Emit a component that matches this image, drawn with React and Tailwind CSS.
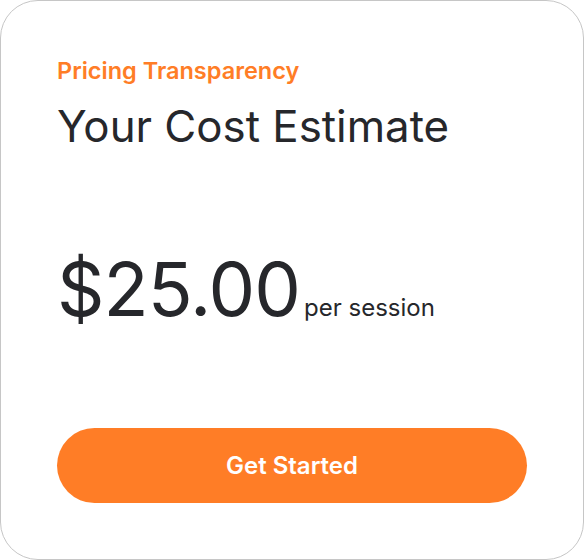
export default function App() {
  return (
    <div className="w-[584px] h-[560px] bg-white font-['Inter',sans-serif]">
      <div className="h-full rounded-[38px] border-[1.5px] border-[#c6c6c6] bg-white px-[56px] pt-[55px] flex flex-col">
        <p className="text-[23.5px] leading-[30px] font-semibold text-[#ff7d26]">Pricing Transparency</p>
        <h1 className="mt-[15px] text-[43.8px] leading-[52px] font-normal text-[#26272b]">
          Your Cost Estimate
        </h1>
        <div className="mt-[96px] flex items-baseline gap-[4px] text-[#26272b]">
          <span className="text-[74px] leading-[80px] font-normal tracking-[-0.9px]">$25.00</span>
          <span className="text-[24px] font-normal">per session</span>
        </div>
        <button className="mt-[99px] h-[75px] w-full rounded-full bg-[#ff7d26] text-white text-[24px] font-semibold">
          Get Started
        </button>
      </div>
    </div>
  );
}
